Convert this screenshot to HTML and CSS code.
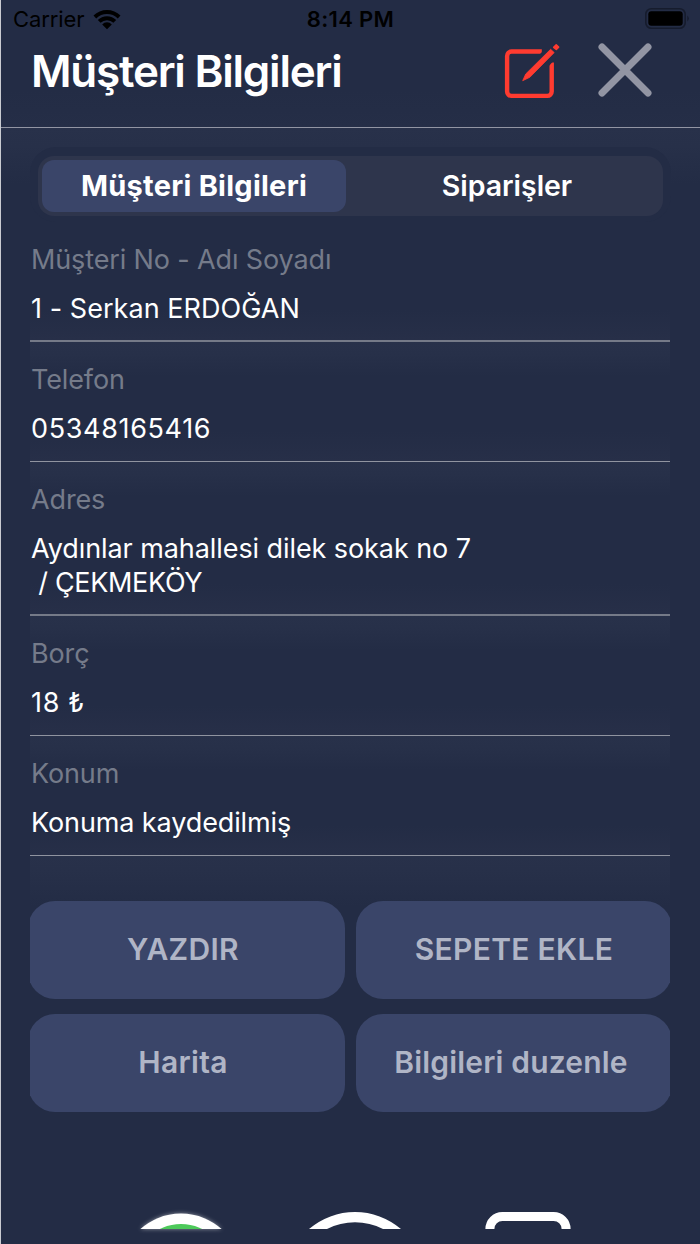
FILE: index.html
```
<!DOCTYPE html>
<html lang="tr">
<head>
<meta charset="utf-8">
<title>Müşteri Bilgileri</title>
<link rel="stylesheet" href="styles.css">
</head>
<body>
<div class="screen">
  <div class="status">
    <span class="carrier"><span>Carrier</span>
      <svg width="28" height="21" viewBox="0 0 28 21"><path d="M.5 6.600A19 19 0 0 1 27.500 6.600L24.800 9.400A15.500 15.500 0 0 0 3.200 9.400ZM4.800 11A12.900 12.900 0 0 1 23.200 11L20.400 13.800A9.200 9.200 0 0 0 7.600 13.800ZM9.200 15.400A6.700 6.700 0 0 1 18.800 15.400L14 20.300Z"/></svg>
    </span>
    <span class="time">8:14 PM</span>
    <svg class="battery" width="45" height="22" viewBox="0 0 45 22"><rect x=".8" y=".8" width="39.400" height="19.400" rx="5.500" fill="none" stroke="#161c2d" stroke-width="1.600"/><rect x="3.300" y="3.300" width="34.400" height="14.400" rx="3"/><path d="M42.300 7.500q3 3 0 6z" fill="#161c2d"/></svg>
  </div>
  <header class="header">
    <h1 class="title">Müşteri Bilgileri</h1>
    <svg class="edit" width="60" height="60" viewBox="503 42 60 60"><path d="M541.800 51.500H511.500a4.400 4.400 0 0 0-4.400 4.400V91.500a4.400 4.400 0 0 0 4.400 4.400H547.300a4.400 4.400 0 0 0 4.400-4.400V62.500" fill="none" stroke="#ff3b30" stroke-width="4.400"/><path d="M539.500 54.500L546 48v6.500ZM548.500 66.500V58H556Z" fill="#232c45"/><path d="M522.700 80.700L525.700 74 550.600 49.300 554.200 52.600 529.800 77.300Z" fill="#ff3b30" stroke="#ff3b30" stroke-width=".8" stroke-linejoin="round"/><path d="M553.700 47.300L556.200 44.900 558.600 47.100 556.300 49.500Z" fill="#ff3b30" stroke="#ff3b30" stroke-width="1.600" stroke-linejoin="round"/></svg>
    <svg class="close" width="56" height="56" viewBox="0 0 56 56"><path d="M5 5L51 51M51 5L5 51" stroke="#9295a3" stroke-width="7" stroke-linecap="round"/></svg>
  </header>
  <main class="main">
    <div class="tabs-wrap"><div class="tabs"><div class="tab active">Müşteri Bilgileri</div><div class="tab">Siparişler</div></div></div>
    <section class="fields">
      <div class="field thick"><div class="label">Müşteri No - Adı Soyadı</div><div class="value">1 - Serkan ERDOĞAN</div></div>
      <div class="field"><div class="label">Telefon</div><div class="value digits">05348165416</div></div>
      <div class="field thick"><div class="label">Adres</div><div class="value address">Aydınlar mahallesi dilek sokak no 7<br><span class="district">&nbsp;/ ÇEKMEKÖY</span></div></div>
      <div class="field"><div class="label">Borç</div><div class="value digits">18 ₺</div></div>
      <div class="field"><div class="label">Konum</div><div class="value location">Konuma kaydedilmiş</div></div>
    </section>
    <div class="actions">
      <div class="action shifted">YAZDIR</div><div class="action">SEPETE EKLE</div>
      <div class="action shifted">Harita</div><div class="action edit-info">Bilgileri duzenle</div>
    </div>
  </main>
  <footer class="dock">
    <svg class="whatsapp" width="100" height="22" viewBox="0 0 100 22"><circle cx="50" cy="67.500" r="61" fill="#fff"/><circle cx="50" cy="65" r="48" fill="#4dc95a"/></svg>
    <svg class="ring" width="100" height="22" viewBox="0 0 100 22"><path d="M4 22A70.700 70.700 0 0 1 96 22H78A62 62 0 0 0 22 22Z" fill="#fff"/></svg>
    <svg class="phone" width="86" height="22" viewBox="0 0 86 22"><path d="M4.900 30V22A12.500 12.500 0 0 1 17.400 9.500H68.600A12.500 12.500 0 0 1 81.100 22V30" fill="none" stroke="#fff" stroke-width="9"/></svg>
  </footer>
</div>
</body>
</html>
```
FILE: styles.css
```
* { box-sizing: border-box; }
body { margin: 0; background: #232c45; font-family: Inter, "Noto Sans", sans-serif; color: #fff; }
svg { display: block; flex: none; }
.screen { height: 1244px; border-left: 1px solid #c9cbd1; display: flex; flex-direction: column; overflow: hidden; }
.status { height: 38px; flex: none; display: grid; grid-template-columns: 1fr auto 1fr; padding: 0 10px 0 12px; color: #000; font-size: 22px; align-items: center; }
.carrier { display: flex; align-items: center; gap: 9px; letter-spacing: -.1px; }
.time { font-weight: 600; letter-spacing: .35px; padding-right: 2px; }
.battery { justify-self: end; }
.header { height: 90px; flex: none; display: flex; align-items: flex-start; padding: 3px 47px 0 30px; border-bottom: 1px solid #9295a3; background: linear-gradient(#232c45 60%, #252e47); }
.title { margin: 0; flex: 1; font-size: 44px; line-height: 60px; font-weight: 600; letter-spacing: -1.23px; white-space: nowrap; }
.edit { margin: 1px 34px 0 0; }
.close { margin-top: 1px; }
.main { flex: none; display: flex; flex-direction: column; background: linear-gradient(#28314a, #273049 18px, #232c45 56px); }
.tabs-wrap { margin: 19px 29px 0; padding: 9px 8px; height: 75px; border-radius: 26px; background: #232c45; }
.tabs { height: 60px; border-radius: 16px; background: #2e354c; display: flex; padding: 4px; }
.tab { flex: 1; display: flex; align-items: center; justify-content: center; font-size: 28.5px; font-weight: 600; padding: 0 0 1px 9px; letter-spacing: -.05px; white-space: nowrap; }
.active { flex: none; width: 304px; background: #3a4569; border-radius: 12px; font-weight: 700; font-size: 29px; padding: 0 0 2px; letter-spacing: .25px; }
.fields { padding: 0 30px 0 29px; }
.field { padding: 21px 0 15px 1px; border-bottom: 1px solid #9094a0; font-size: 27px; line-height: 34px; background: linear-gradient(#28314a, #273049 12px, #232c45 34px, #232c45 calc(100% - 30px), #272f48); }
.field:first-child { background: linear-gradient(transparent calc(100% - 30px), #272f48); }
.thick { padding-bottom: 14px; border-bottom: 2px solid #757a88; }
.label { color: #757b8a; margin-bottom: 15px; letter-spacing: -.13px; }
.value { letter-spacing: .05px; }
.address { letter-spacing: -.08px; }
.district { letter-spacing: -.33px; }
.location { letter-spacing: -.11px; }
.digits { letter-spacing: .65px; }
.actions { margin: 0 30px 0 29px; padding-top: 45px; background: linear-gradient(#28314a, #273049 14px, #232c45 50px); display: grid; grid-template-columns: 317px 316px; justify-content: center; gap: 15.500px 11px; overflow: hidden; }
.action { height: 97.500px; border-radius: 27px; background: #3a4569; color: #b0b5c6; font-size: 30px; font-weight: 600; letter-spacing: .3px; padding-bottom: 2px; display: flex; align-items: center; justify-content: center; }
.shifted { padding-right: 7px; }
.edit-info { letter-spacing: .18px; padding-right: 6px; }
.dock { height: 22px; margin-top: 95px; flex: none; display: flex; padding-left: 130px; }
.ring { margin-left: 74px; }
.phone { margin-left: 80px; }
.whatsapp { filter: drop-shadow(0 0 2px rgba(255, 255, 255, .5)); }
```
